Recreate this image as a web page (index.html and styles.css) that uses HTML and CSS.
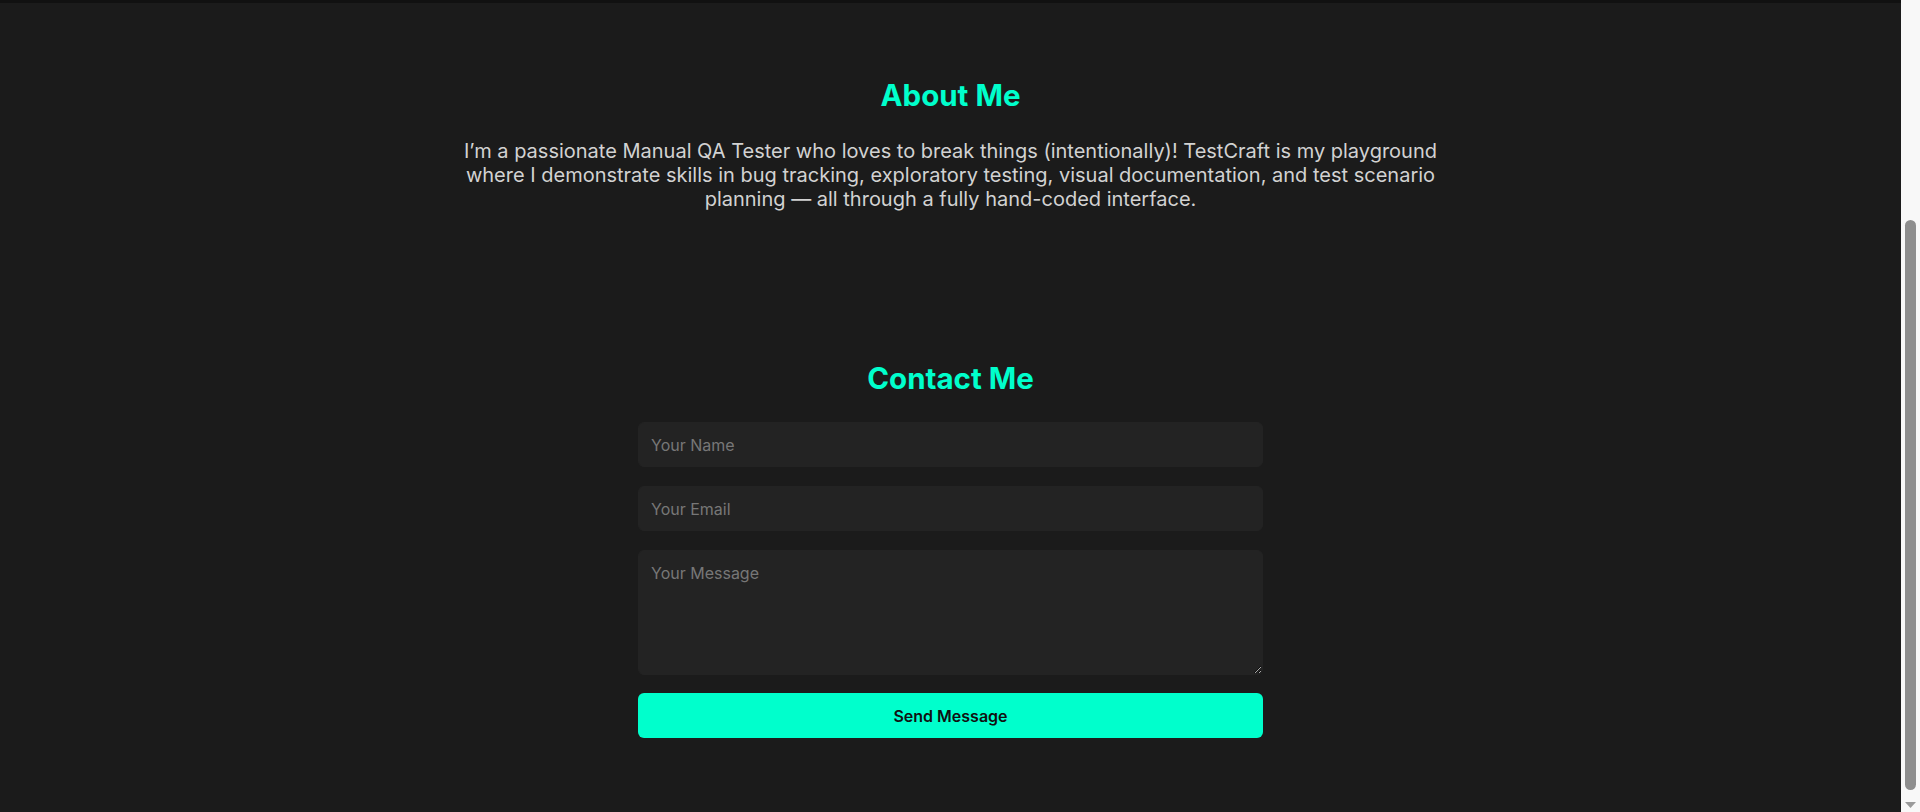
FILE: index.html
```html
<!DOCTYPE html>
<html lang="en">
<head>
<meta charset="UTF-8">
<title>TestCraft</title>
<link rel="stylesheet" href="styles.css">
</head>
<body>
  <div class="page">
    <div class="top-band"></div>

    <section class="section about">
      <h2 class="section-title">About Me</h2>
      <p class="about-text">I’m a passionate Manual QA Tester who loves to break things (intentionally)! TestCraft is my playground where I demonstrate skills in bug tracking, exploratory testing, visual documentation, and test scenario planning — all through a fully hand-coded interface.</p>
    </section>

    <section class="section contact">
      <h2 class="section-title">Contact Me</h2>
      <form class="contact-form">
        <input class="field" type="text" placeholder="Your Name">
        <input class="field" type="email" placeholder="Your Email">
        <textarea class="field field-area" placeholder="Your Message"></textarea>
        <button class="send-btn" type="button">Send Message</button>
      </form>
    </section>
  </div>

  <div class="scrollbar" aria-hidden="true">
    <div class="sb-button"></div>
    <div class="sb-track">
      <div class="sb-thumb"></div>
    </div>
    <div class="sb-button sb-down">
      <svg width="11" height="6" viewBox="0 0 11 6"><polygon points="0,0 11,0 5.5,6" fill="#9a9a9a"/></svg>
    </div>
  </div>
</body>
</html>
```

FILE: styles.css
```css
html, body {
  margin: 0;
  padding: 0;
  height: 100%;
}

body {
  display: flex;
  overflow: hidden;
  background: #1b1b1b;
  color: #d2d2d2;
  font-family: Inter, "Noto Sans", sans-serif;
}

.page {
  flex: 1;
  min-width: 0;
  height: 100vh;
  overflow: hidden;
}

.top-band {
  height: 3px;
  background: #111111;
}

.section {
  padding: 75px 20px;
  text-align: center;
}

.section-title {
  margin: 0 0 26px;
  color: #00ffcc;
  font-size: 29.5px;
  font-weight: 700;
  line-height: 35px;
}

.about-text {
  max-width: 1000px;
  margin: 0 auto;
  font-size: 20px;
  line-height: 24px;
}

.contact-form {
  width: 625px;
  margin: 0 auto;
  display: flex;
  flex-direction: column;
  gap: 19px;
}

.field {
  box-sizing: border-box;
  width: 100%;
  height: 45px;
  padding: 12px;
  background: #232323;
  border: 1px solid #232323;
  border-radius: 6px;
  color: #eeeeee;
  font-family: Inter, "Noto Sans", sans-serif;
  font-size: 16px;
  outline: none;
}

.field::placeholder {
  color: #777777;
}

.field-area {
  height: 125px;
  resize: vertical;
}

.send-btn {
  box-sizing: border-box;
  height: 45px;
  margin-top: -1px;
  background: #00ffcc;
  border: none;
  border-radius: 6px;
  color: #111111;
  font-family: Inter, "Noto Sans", sans-serif;
  font-size: 16px;
  font-weight: 600;
  cursor: pointer;
}

/* scrollbar rail as shown in the screenshot */
.scrollbar {
  flex: 0 0 19px;
  height: 100vh;
  display: flex;
  flex-direction: column;
  background: #f8f8f8;
}

.sb-button {
  height: 15px;
  display: flex;
  align-items: center;
  justify-content: center;
}

.sb-track {
  flex: 1;
  display: flex;
  flex-direction: column;
  justify-content: flex-end;
  align-items: center;
  padding-bottom: 7px;
}

.sb-thumb {
  width: 11px;
  height: 570px;
  border-radius: 6px;
  background: #8e8e8e;
}
```
